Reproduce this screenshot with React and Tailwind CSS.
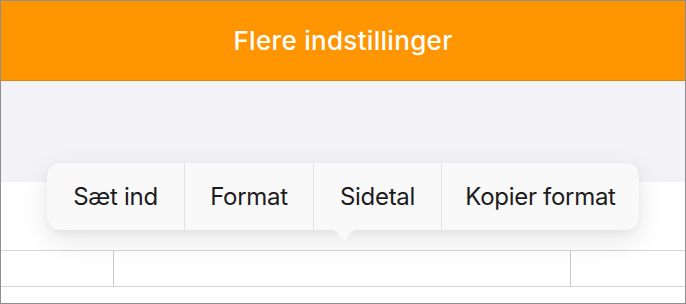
import React from 'react';

const items = [
  { label: 'Sæt ind', w: 'w-[137px]' },
  { label: 'Format', w: 'w-[129px]' },
  { label: 'Sidetal', w: 'w-[128px]' },
  { label: 'Kopier format', w: 'w-[198px]' },
];

const App = () => {
  return (
    <div
      className="relative w-[686px] h-[304px] overflow-hidden border border-[#8e8e8e] bg-white flex flex-col"
      style={{ fontFamily: 'Inter, Roboto, "Liberation Sans", sans-serif' }}
    >
      <header className="h-[80px] shrink-0 bg-[#ff9500] flex items-center justify-center border-b border-[#d9860f]">
        <h1 className="text-white text-[26px] font-medium tracking-[0.3px] pb-[1px]">Flere indstillinger</h1>
      </header>

      <div className="h-[101px] shrink-0 bg-[#f2f2f7]" />

      <div className="flex-1 flex flex-col bg-white">
        <div className="h-[68px] shrink-0" />
        <div className="h-[37px] shrink-0 flex border-y border-[#d4d4da]">
          <div className="w-[113px] border-r border-[#c9c9d0]" />
          <div className="w-[457px] border-r border-[#c9c9d0]" />
          <div className="flex-1" />
        </div>
        <div className="flex-1" />
      </div>

      {/* context menu */}
      <div className="absolute left-[46px] top-[162px]">
        <div className="flex h-[67px] rounded-[13px] bg-[#f9f9f9] shadow-[0_10px_28px_rgba(0,0,0,0.10),0_2px_6px_rgba(0,0,0,0.05)] overflow-hidden">
          {items.map((it, i) => (
            <div
              key={it.label}
              className={`${it.w} flex items-center justify-center text-[24px] tracking-[-0.3px] text-[#1c1c1e] ${
                i > 0 ? 'border-l border-[#e2e2e4]' : ''
              }`}
            >
              {it.label}
            </div>
          ))}
        </div>
        <svg
          className="absolute left-[280px] top-[66px]"
          width="34"
          height="14"
          viewBox="0 0 34 14"
        >
          <path d="M0 0 H34 C27 0 25 2 21 7 L19 10 Q17 13 15 10 L13 7 C9 2 7 0 0 0 Z" fill="#f9f9f9" />
        </svg>
      </div>
    </div>
  );
};

export default App;
